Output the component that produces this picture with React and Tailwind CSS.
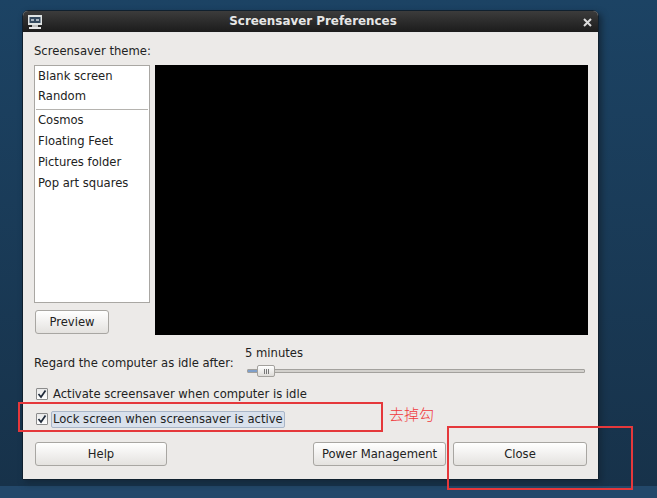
import React from 'react';

const themes = ['Cosmos', 'Floating Feet', 'Pictures folder', 'Pop art squares'];

const Button = ({ children, className }) => (
  <button className={`h-[24px] rounded-[3px] border border-[#a8a6a2] bg-gradient-to-b from-white to-[#e4e2df] text-[11.6px] text-[#222] ${className}`}>
    {children}
  </button>
);

const Check = () => (
  <span className="flex h-[12px] w-[12px] shrink-0 items-center justify-center rounded-[1px] border border-[#8b8b8b] bg-gradient-to-b from-[#e8e8e8] to-white">
    <svg width="10" height="10" viewBox="0 0 10 10" fill="none">
      <path d="M1.5 5 L4 8 L8.5 1.5" stroke="#1f2a3a" strokeWidth="1.7" />
    </svg>
  </span>
);

const App = () => {
  return (
    <div className="relative h-[498px] w-[657px] overflow-hidden bg-[#23486a] font-['DejaVu_Sans',sans-serif]">
      <div className="flex h-[486px] flex-col bg-gradient-to-b from-[#1c4364] to-[#17324a] pl-[22px] pt-[10px]">
        {/* Window */}
        <div className="flex h-[470px] w-[577px] flex-col overflow-hidden rounded-t-[6px] border border-[#10202e] bg-[#eceae8] shadow-[3px_3px_6px_#14293c]">
          <div className="flex h-[22px] shrink-0 items-center justify-between border-b border-[#e8e8e8] bg-gradient-to-b from-[#3c3c3c] to-[#1c1c1c] pl-[4px] pr-[6px] pt-px">
            <svg width="16" height="16" viewBox="0 0 16 16">
              <rect x="1" y="1" width="14" height="10" fill="#dfe3e3" />
              <rect x="2.5" y="3" width="11" height="6" fill="#34495e" />
              <rect x="4" y="5" width="3" height="2" fill="#a9b4bf" />
              <rect x="9" y="5" width="3" height="2" fill="#a9b4bf" />
              <rect x="5" y="11" width="6" height="2" fill="#bfbfbf" />
              <rect x="2" y="13" width="12" height="2" fill="#e6e6e6" />
            </svg>
            <span className="text-[11.9px] font-bold text-[#e6e6e6]">Screensaver Preferences</span>
            <svg width="9" height="9" viewBox="0 0 9 9">
              <path d="M1 1 L8 8 M8 1 L1 8" stroke="#dcdcdc" strokeWidth="2" />
            </svg>
          </div>

          <div className="flex flex-1 flex-col pl-[11px] pr-[10px] text-[11.6px] leading-[15px] text-[#222]">
            <div className="mt-[11px] h-[15px]">Screensaver theme:</div>
            <div className="mt-[6px] flex h-[270px] gap-[5px]">
              <div className="flex w-[116px] shrink-0 flex-col">
                <div className="h-[238px] border border-[#a9a7a3] bg-white pl-[3px]">
                  <div className="flex h-[20px] items-center">Blank screen</div>
                  <div className="flex h-[21px] items-center">Random</div>
                  <div className="-ml-[2px] mr-[1px] mt-[2px] h-px bg-[#b5b3af]" />
                  {themes.map((t) => (
                    <div key={t} className="flex h-[21px] items-center">{t}</div>
                  ))}
                </div>
                <Button className="ml-px mt-[7px] w-[74px]">Preview</Button>
              </div>
              <div className="flex-1 bg-black" />
            </div>

            <div className="mt-[10px] flex h-[37px]">
              <div className="mt-[11px] w-[211px] shrink-0">Regard the computer as idle after:</div>
              <div className="flex flex-1 flex-col">
                <div className="mt-px h-[15px]">5 minutes</div>
                <div className="relative ml-[2px] mt-[8px] h-[4px] w-[338px] rounded-[1px] border border-[#a3a19d] bg-[#d3d1cd]">
                  <div className="h-full w-[10px] bg-[#7f9fc9]" />
                  <div className="absolute -top-[5px] left-[9px] flex h-[12px] w-[18px] items-center justify-center gap-[1px] rounded-[2px] border border-[#a3a19d] bg-gradient-to-b from-white to-[#dedcd9]">
                    <span className="h-[5px] w-px bg-[#777]" />
                    <span className="h-[5px] w-px bg-[#777]" />
                    <span className="h-[5px] w-px bg-[#777]" />
                  </div>
                </div>
              </div>
            </div>

            <div className="mt-[3px] flex h-[18px] items-center gap-[5px] pl-[2px]">
              <Check />
              <span>Activate screensaver when computer is idle</span>
            </div>
            <div className="mt-[7px] flex h-[18px] items-center gap-[3px] pl-[2px]">
              <Check />
              <span className="rounded-[2px] border border-[#a9b6c8] bg-[#d9e1ec] px-[1px]">Lock screen when screensaver is active</span>
            </div>

            <div className="mt-[14px] flex pl-px pr-px">
              <Button className="w-[132px]">Help</Button>
              <div className="flex-1" />
              <Button className="w-[133px]">Power Management</Button>
              <Button className="ml-[7px] w-[134px]">Close</Button>
            </div>
          </div>
        </div>
      </div>

      {/* Red annotations */}
      <div className="absolute left-[18px] top-[402px] h-[30px] w-[365px] border-[2px] border-[#e5383b]" />
      <div className="absolute left-[447px] top-[426px] h-[64px] w-[186px] border-[2px] border-[#e5383b]" />
      <span className="absolute left-[389px] top-[405px] font-['Noto_Sans_CJK_SC',sans-serif] text-[15px] font-light leading-[18px] text-[#f0393c]">去掉勾</span>
    </div>
  );
};

export default App;
